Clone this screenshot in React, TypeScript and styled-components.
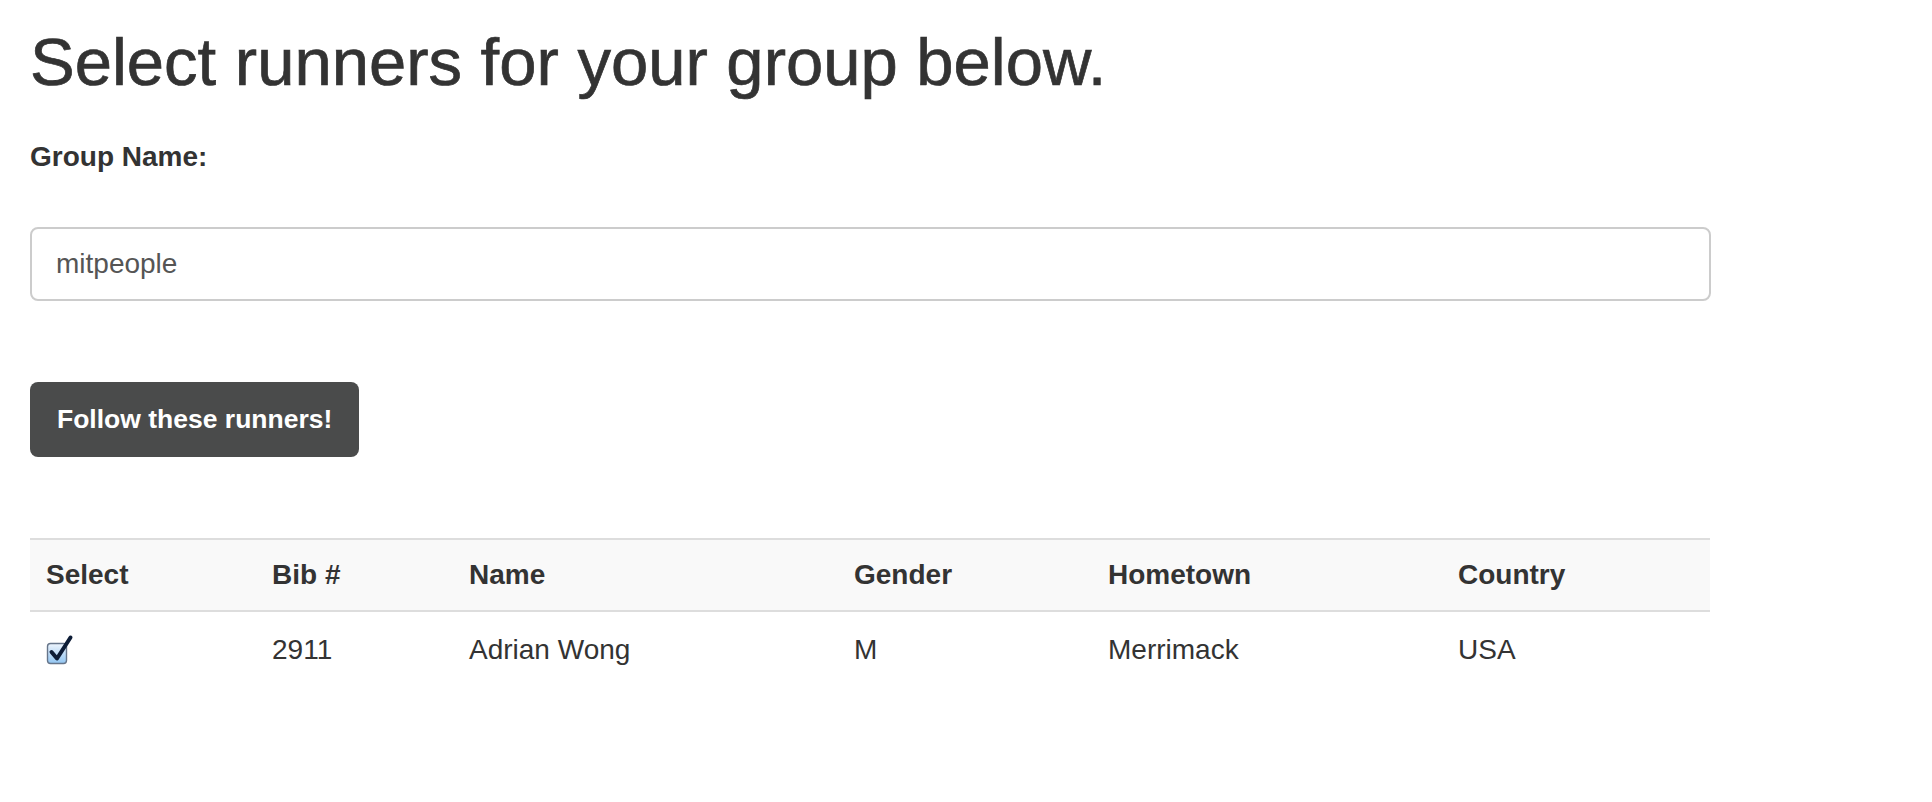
import styled, { createGlobalStyle } from "styled-components";

interface Runner {
  bib: string;
  name: string;
  gender: string;
  hometown: string;
  country: string;
  selected: boolean;
}

const runners: Runner[] = [
  { bib: "2911", name: "Adrian Wong", gender: "M", hometown: "Merrimack", country: "USA", selected: true },
];

const columns = [
  { label: "Select", width: 226 },
  { label: "Bib #", width: 197 },
  { label: "Name", width: 385 },
  { label: "Gender", width: 254 },
  { label: "Hometown", width: 350 },
  { label: "Country", width: 268 },
];

const GlobalStyle = createGlobalStyle`
  html, body {
    margin: 0;
    padding: 0;
    background: #fff;
  }
  body {
    font-family: "Liberation Sans", Arial, sans-serif;
    color: #333;
  }
`;

const Page = styled.div`
  padding: 0 30px;
  width: 1680px;
`;

const Title = styled.h1`
  margin: 22px 0 0;
  font-size: 67px;
  line-height: 80px;
  font-weight: 400;
  color: #333;
  -webkit-text-stroke: 0.7px #333;
`;

const Label = styled.label`
  display: block;
  margin-top: 35px;
  font-size: 28px;
  line-height: 40px;
  font-weight: 700;
`;

const TextInput = styled.input`
  display: block;
  box-sizing: border-box;
  width: 1681px;
  height: 74px;
  margin-top: 50px;
  padding: 0 24px;
  border: 2px solid #ccc;
  border-radius: 8px;
  font-family: "Liberation Sans", Arial, sans-serif;
  font-size: 28px;
  color: #555;
  outline: none;
`;

const SubmitButton = styled.button`
  display: block;
  box-sizing: border-box;
  height: 75px;
  margin-top: 81px;
  padding: 0 27px;
  border: none;
  border-radius: 8px;
  background: #4a4b4b;
  color: #fff;
  font-family: "Liberation Sans", Arial, sans-serif;
  font-size: 26.5px;
  font-weight: 700;
  cursor: pointer;
`;

const Table = styled.table`
  margin-top: 81px;
  width: 1680px;
  table-layout: fixed;
  border-collapse: collapse;
  border-top: 2px solid #ddd;
  font-size: 28px;
  line-height: 40px;
`;

const HeadRow = styled.tr`
  background: #f9f9f9;
  border-bottom: 2px solid #ddd;
`;

const HeadCell = styled.th`
  padding: 15px 16px;
  text-align: left;
  font-weight: 700;
`;

const Cell = styled.td`
  padding: 18px 16px;
  vertical-align: top;
`;

const CheckIcon = styled.svg`
  display: block;
  margin-top: 4px;
`;

function Checkbox() {
  return (
    <CheckIcon width="28" height="32" viewBox="0 0 28 32">
      <defs>
        <linearGradient id="cbfill" x1="0" y1="0" x2="0" y2="1">
          <stop offset="0" stopColor="#eef5fd" />
          <stop offset="0.45" stopColor="#c4def7" />
          <stop offset="1" stopColor="#92c6f2" />
        </linearGradient>
      </defs>
      <rect x="1.5" y="9.5" width="19" height="20" rx="3" fill="url(#cbfill)" stroke="#66758a" strokeWidth="1.4" />
      <path d="M5.5 18 L11 24.5 L24.5 3.5" fill="none" stroke="#0d1c36" strokeWidth="4" strokeLinecap="round" strokeLinejoin="round" />
    </CheckIcon>
  );
}

export default function App() {
  return (
    <>
      <GlobalStyle />
      <Page>
        <Title>Select runners for your group below.</Title>
        <Label htmlFor="group-name">Group Name:</Label>
        <TextInput id="group-name" type="text" defaultValue="mitpeople" />
        <SubmitButton>Follow these runners!</SubmitButton>
        <Table>
          <colgroup>
            {columns.map((c) => (
              <col key={c.label} style={{ width: c.width }} />
            ))}
          </colgroup>
          <thead>
            <HeadRow>
              {columns.map((c) => (
                <HeadCell key={c.label}>{c.label}</HeadCell>
              ))}
            </HeadRow>
          </thead>
          <tbody>
            {runners.map((r) => (
              <tr key={r.bib}>
                <Cell>{r.selected && <Checkbox />}</Cell>
                <Cell>{r.bib}</Cell>
                <Cell>{r.name}</Cell>
                <Cell>{r.gender}</Cell>
                <Cell>{r.hometown}</Cell>
                <Cell>{r.country}</Cell>
              </tr>
            ))}
          </tbody>
        </Table>
      </Page>
    </>
  );
}
